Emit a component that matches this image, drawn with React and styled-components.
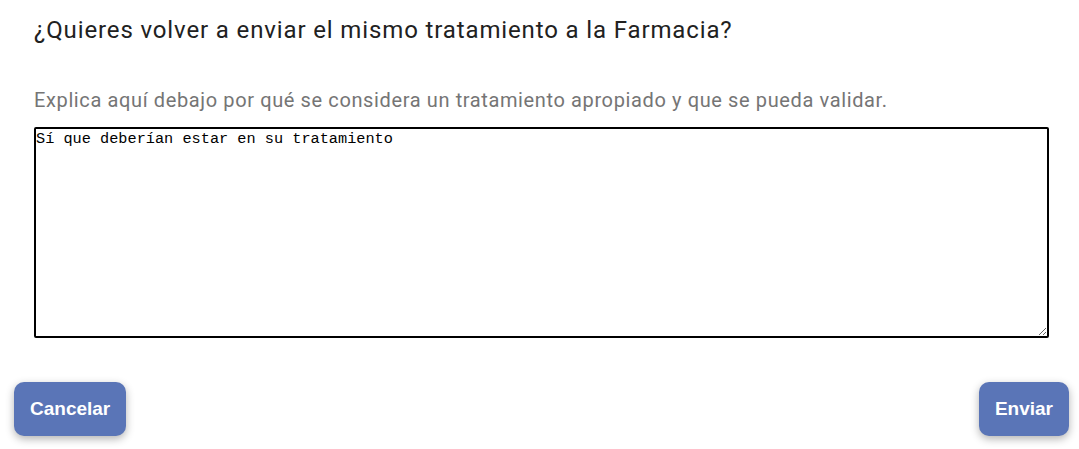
import styled, { createGlobalStyle } from "styled-components";

const GlobalStyle = createGlobalStyle`
body {
    margin: 0;
    background: #fff;
}
`

const StyledModal = styled.div`
width: 1079px;
height: 449px;
box-sizing: border-box;
display: flex;
flex-direction: column;
`

const StyledContent = styled.div`
padding: 14px 30px 0 34px;
display: flex;
flex-direction: column;
`

const StyledTitle = styled.h2`
margin: 0;
font-family: Roboto, sans-serif;
font-weight: 400;
font-size: 24px;
line-height: 32px;
color: #212121;
letter-spacing: 0.87px;
`

const StyledHint = styled.p`
margin: 42px 0 0 0;
font-family: Roboto, sans-serif;
font-size: 20px;
line-height: 24px;
color: #757575;
letter-spacing: 0.62px;
`

const StyledTextarea = styled.textarea`
margin-top: 15px;
width: 1015px;
height: 211px;
box-sizing: border-box;
border: 2px solid #000;
border-radius: 2px;
padding: 1px 0 0 0;
font-family: "Liberation Mono", monospace;
font-size: 15.25px;
line-height: 18px;
color: #000;
resize: both;
outline: none;
`

const StyledFooter = styled.div`
display: flex;
justify-content: space-between;
padding: 44px 10px 0 14px;
`

const StyledButton = styled.button`
height: 54px;
padding: 0 16px;
border: 0;
border-radius: 10px;
background-color: #5a75b7;
color: #fff;
font-family: "Liberation Sans", Arial, sans-serif;
font-weight: 700;
font-size: 19px;
box-shadow: 0 3px 8px rgba(0, 0, 0, 0.3);
cursor: pointer;
`

function App() {
    return (
        <StyledModal>
            <GlobalStyle />
            <StyledContent>
                <StyledTitle>¿Quieres volver a enviar el mismo tratamiento a la Farmacia?</StyledTitle>
                <StyledHint>Explica aquí debajo por qué se considera un tratamiento apropiado y que se pueda validar.</StyledHint>
                <StyledTextarea defaultValue="Sí que deberían estar en su tratamiento" />
            </StyledContent>
            <StyledFooter>
                <StyledButton>Cancelar</StyledButton>
                <StyledButton>Enviar</StyledButton>
            </StyledFooter>
        </StyledModal>
    )
}

export default App;
